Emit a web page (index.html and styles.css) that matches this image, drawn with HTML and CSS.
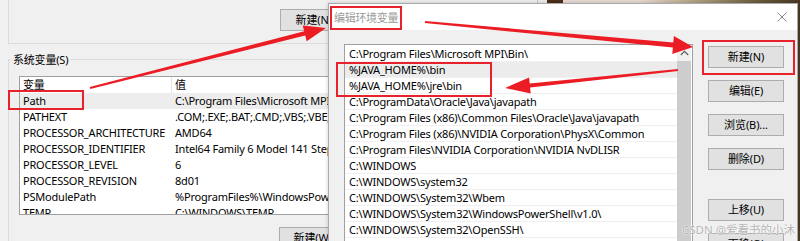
FILE: index.html
```html
<!DOCTYPE html>
<html lang="zh-CN">
<head>
<meta charset="utf-8">
<title>编辑环境变量</title>
<link rel="stylesheet" href="styles.css">
</head>
<body>
<div class="desktop">
  <section class="env-window">
    <div class="user-group">
      <button class="btn">新建(N)...</button>
    </div>
    <div class="sys-group">
      <span class="group-label">系统变量(S)</span>
      <div class="var-list">
        <div class="var-row var-head"><span class="c1">变量</span><span class="c2">值</span></div>
        <div class="var-row selected"><span class="c1">Path</span><span class="c2">C:\Program Files\Microsoft MPI\Bin\;%JAVA_HOME%\bin</span></div>
        <div class="var-row"><span class="c1">PATHEXT</span><span class="c2">.COM;.EXE;.BAT;.CMD;.VBS;.VBE;.JS;.JSE</span></div>
        <div class="var-row"><span class="c1">PROCESSOR_ARCHITECTURE</span><span class="c2">AMD64</span></div>
        <div class="var-row"><span class="c1">PROCESSOR_IDENTIFIER</span><span class="c2">Intel64 Family 6 Model 141 Stepping 1</span></div>
        <div class="var-row"><span class="c1">PROCESSOR_LEVEL</span><span class="c2">6</span></div>
        <div class="var-row"><span class="c1">PROCESSOR_REVISION</span><span class="c2">8d01</span></div>
        <div class="var-row"><span class="c1">PSModulePath</span><span class="c2">%ProgramFiles%\WindowsPowerShell\Modules</span></div>
        <div class="var-row"><span class="c1">TEMP</span><span class="c2">C:\WINDOWS\TEMP</span></div>
      </div>
      <div class="sys-buttons"><button class="btn">新建(W)...</button></div>
    </div>
  </section>

  <section class="dialog">
    <header class="titlebar">
      <span class="title">编辑环境变量</span>
      <svg class="close" width="10" height="10" viewBox="0 0 10 10"><path d="M0.5 0.5 L9.5 9.5 M9.5 0.5 L0.5 9.5" stroke="#8c8c8c" stroke-width="1" fill="none"/></svg>
    </header>
    <div class="dialog-body">
      <div class="path-list">
        <ul class="rows">
          <li>C:\Program Files\Microsoft MPI\Bin\</li>
          <li class="hover">%JAVA_HOME%\bin</li>
          <li>%JAVA_HOME%\jre\bin</li>
          <li>C:\ProgramData\Oracle\Java\javapath</li>
          <li>C:\Program Files (x86)\Common Files\Oracle\Java\javapath</li>
          <li>C:\Program Files (x86)\NVIDIA Corporation\PhysX\Common</li>
          <li>C:\Program Files\NVIDIA Corporation\NVIDIA NvDLISR</li>
          <li>C:\WINDOWS</li>
          <li>C:\WINDOWS\system32</li>
          <li>C:\WINDOWS\System32\Wbem</li>
          <li>C:\WINDOWS\System32\WindowsPowerShell\v1.0\</li>
          <li>C:\WINDOWS\System32\OpenSSH\</li>
          <li>%SYSTEMROOT%\System32\OpenSSH\</li>
        </ul>
        <div class="scrollbar">
          <div class="arrow-up"><svg width="9" height="6" viewBox="0 0 9 6"><path d="M0.8 5 L4.5 1.3 L8.2 5" stroke="#606060" stroke-width="1.3" fill="none"/></svg></div>
          <div class="thumb"></div>
        </div>
      </div>
      <div class="actions">
        <button class="btn">新建(N)</button>
        <button class="btn">编辑(E)</button>
        <button class="btn">浏览(B)...</button>
        <button class="btn">删除(D)</button>
        <button class="btn spaced">上移(U)</button>
        <button class="btn">下移(O)</button>
      </div>
    </div>
  </section>

  <div class="mark mark-path"></div>
  <div class="mark mark-title"></div>
  <div class="mark mark-java"></div>
  <div class="mark mark-new"></div>

  <svg class="arrows" width="800" height="241" viewBox="0 0 800 241">
    <polygon points="89.75,87.03 304.2,31.3 302.7,25.6 326,28 306.7,41.2 305.2,35.5 90.25,88.97"/>
    <polygon points="425.1,21 673.3,42.6 673.9,36.1 693,47 672.3,54.1 672.9,47.6 424.9,23"/>
    <polygon points="677.9,69 529.7,83.4 529.1,77.4 505,88 530.7,93.4 530.1,87.4 678.1,71"/>
  </svg>

  <div class="watermark">CSDN @爱看书的小沐</div>
</div>
</body>
</html>
```

FILE: styles.css
```css
html, body {
  margin: 0;
  padding: 0;
}

body {
  font-family: "Noto Sans", "Noto Sans CJK SC", sans-serif;
  font-size: 11px;
  letter-spacing: -0.2px;
  color: #000;
}

.desktop {
  position: relative;
  width: 800px;
  height: 241px;
  overflow: hidden;
  background: linear-gradient(90deg,
    #f0f0f0 0 537px, #c4c4c4 537px 538px, #ececec 538px 547px,
    #4a2e18 547px 563px, #e8dad3 563px 640px, #b8a888 690px,
    #6a5a3a 760px, #4a3824 800px);
}

/* ---------- background window ---------- */
.env-window {
  position: absolute;
  left: 0;
  top: 0;
  width: 420px;
  height: 241px;
  background: #f0f0f0;
}

.user-group {
  box-sizing: border-box;
  height: 44px;
  margin-left: 8px;
  padding: 9px 0 0 271px;
  border-left: 1px solid #dcdcdc;
  border-bottom: 1px solid #dcdcdc;
}

.btn {
  box-sizing: border-box;
  width: 76px;
  height: 22px;
  padding: 0;
  background: #e1e1e1;
  border: 1px solid #adadad;
  font-family: "Noto Sans", "Noto Sans CJK SC", sans-serif;
  font-size: 11px;
  letter-spacing: -0.1px;
  color: #000;
  line-height: 18px;
}

.sys-group {
  box-sizing: border-box;
  height: 190px;
  margin: 15px 0 0 8px;
  border-left: 1px solid #dcdcdc;
  border-top: 1px solid #dcdcdc;
}

.group-label {
  display: block;
  width: fit-content;
  margin: -9px 0 0 2px;
  padding: 0 2px;
  background: #f0f0f0;
  line-height: 17px;
  color: #000;
}

.var-list {
  box-sizing: border-box;
  height: 139px;
  margin: 8px 0 0 10px;
  background: #fff;
  border: 1px solid #a0a0a0;
  border-right: none;
  overflow: hidden;
}

.var-row {
  display: grid;
  grid-template-columns: 152px 1fr;
  height: 16px;
  line-height: 16px;
  white-space: nowrap;
}

.var-row .c1 {
  padding-left: 3px;
  overflow: hidden;
}

.var-row .c2 {
  padding-left: 3px;
  overflow: hidden;
}

.var-head .c1 {
  border-right: 1px solid #e5e5e5;
}

.var-row.selected {
  background: #ededed;
}

.sys-buttons {
  padding: 12px 0 0 270px;
}

/* ---------- dialog ---------- */
.dialog {
  position: absolute;
  left: 328px;
  top: 3px;
  width: 470px;
  height: 260px;
  box-sizing: border-box;
  background: #f0f0f0;
  border: 1px solid #aaaaaa;
  box-shadow: 0 0 4px rgba(0, 0, 0, 0.2);
}

.titlebar {
  display: flex;
  align-items: center;
  justify-content: space-between;
  height: 26px;
  padding: 0 10px 0 5px;
  background: #fff;
}

.title {
  color: #9a9a9a;
  font-size: 11px;
  letter-spacing: -0.3px;
}

.dialog-body {
  display: flex;
  gap: 15px;
  padding: 14px 0 0 15px;
}

.path-list {
  display: flex;
  box-sizing: border-box;
  width: 349px;
  height: 230px;
  background: #fff;
  border: 1px solid #a0a0a0;
}

.rows {
  flex: 1;
  margin: 0;
  padding: 1px 0 0;
  list-style: none;
  overflow: hidden;
}

.rows li {
  box-sizing: border-box;
  height: 16px;
  line-height: 15px;
  padding-left: 4px;
  border-bottom: 1px solid #f0f0f0;
  white-space: nowrap;
}

.rows li.hover {
  background: #ececec;
}

.scrollbar {
  display: flex;
  flex-direction: column;
  width: 14px;
  margin-right: 1px;
  background: #f0f0f0;
}

.arrow-up {
  display: flex;
  align-items: center;
  justify-content: center;
  height: 16px;
}

.thumb {
  flex: 1;
  background: #cdcdcd;
}

.actions {
  display: flex;
  flex-direction: column;
  gap: 12px;
  padding-top: 2px;
}

.actions .spaced {
  margin-top: 17px;
}

/* ---------- annotations ---------- */
.mark {
  position: absolute;
  box-sizing: border-box;
  border: 2px solid #e8222b;
}

.mark-path  { left: 8px;   top: 90px; width: 76px;  height: 20px; }
.mark-title { left: 330px; top: 6px;  width: 72px;  height: 24px; }
.mark-java  { left: 336px; top: 62px; width: 156px; height: 35px; }
.mark-new   { left: 702px; top: 40px; width: 93px;  height: 35px; }

.arrows {
  position: absolute;
  left: 0;
  top: 0;
  fill: #ec1c24;
  pointer-events: none;
}

.watermark {
  position: absolute;
  left: 682px;
  top: 221px;
  font-size: 11.5px;
  letter-spacing: 0;
  color: #b4b4b4;
  text-shadow: 0 0 1px #ffffff, 0 0 2px #ffffff;
  white-space: nowrap;
}
```
